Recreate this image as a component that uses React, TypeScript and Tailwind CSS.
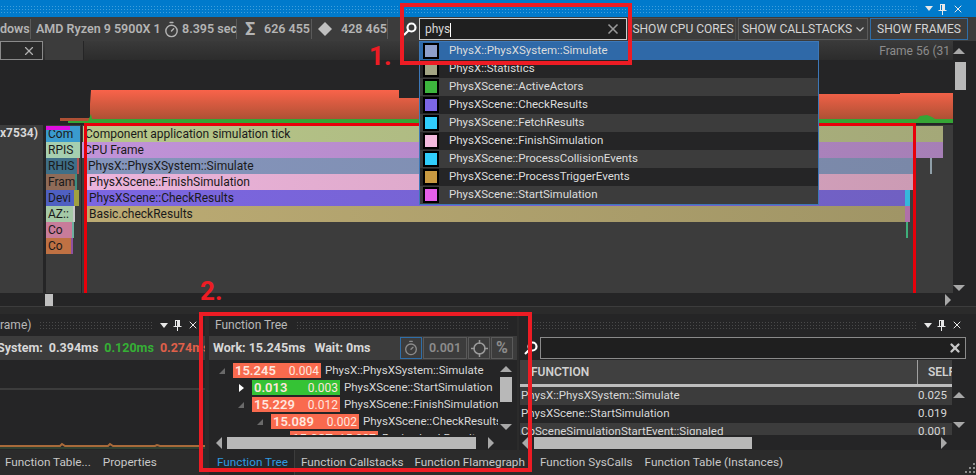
import React from "react";
import { Timer, X } from "lucide-react";

const font = "font-['Roboto','Noto_Sans',sans-serif]";

const PinIcon = () => (
  <svg width="9" height="12" viewBox="0 0 9 12" className="text-[#e8e8e8]">
    <path d="M2 1h5v6h1.500v1h-3.500v4h-1v-4h-3.500v-1h1.500z M3 2v5h1v-5z" fill="currentColor" fillRule="evenodd" />
  </svg>
);

const PanelControls = () => (
  <div className="flex items-center gap-[5px] text-[#e8e8e8]">
    <span className="w-0 h-0 border-l-[4px] border-r-[4px] border-t-[5px] border-l-transparent border-r-transparent border-t-[#e8e8e8]" />
    <PinIcon />
    <X size={12} strokeWidth={2} />
  </div>
);

const SearchIcon = ({ size = 14 }: { size?: number }) => (
  <svg width={size} height={size} viewBox="0 0 14 14" fill="none" stroke="#ffffff" strokeWidth="2.200">
    <circle cx="8.500" cy="5.500" r="4" />
    <path d="M5.500 8.500 1 13" />
  </svg>
);

const Sep = () => <span className="block w-px h-[20px] bg-[#5a5a5a] shrink-0" />;

const dropdownRows = [
  { name: "PhysX::PhysXSystem::Simulate", color: "bg-[#8f9fcb]", row: "bg-[#2f69a8]" },
  { name: "PhysX::Statistics", color: "bg-[#a3a584]", row: "bg-[#252526]" },
  { name: "PhysXScene::ActiveActors", color: "bg-[#3db53d]", row: "bg-[#3c3c3c]" },
  { name: "PhysXScene::CheckResults", color: "bg-[#7c66e4]", row: "bg-[#252526]" },
  { name: "PhysXScene::FetchResults", color: "bg-[#30cdfb]", row: "bg-[#3c3c3c]" },
  { name: "PhysXScene::FinishSimulation", color: "bg-[#f3bade]", row: "bg-[#252526]" },
  { name: "PhysXScene::ProcessCollisionEvents", color: "bg-[#30cdfb]", row: "bg-[#3c3c3c]" },
  { name: "PhysXScene::ProcessTriggerEvents", color: "bg-[#c99a41]", row: "bg-[#252526]" },
  { name: "PhysXScene::StartSimulation", color: "bg-[#e65fe8]", row: "bg-[#3c3c3c]" },
];

const trackBars = [
  { l: 46, t: 1, w: 34, c: "bg-[#3a9bce]", label: "Com" },
  { l: 46, t: 17, w: 34, c: "bg-[#a6cfb0]", label: "RPIS" },
  { l: 46, t: 33, w: 31, c: "bg-[#3f6f88]", label: "RHIS" },
  { l: 46, t: 49, w: 29, c: "bg-[#8f6b58]", label: "Fram" },
  { l: 46, t: 65, w: 28, c: "bg-[#4f60c2]", label: "Devi" },
  { l: 46, t: 81, w: 27, c: "bg-[#a5c9a6]", label: "AZ::" },
  { l: 46, t: 97, w: 26, c: "bg-[#c87c9a]", label: "Co" },
  { l: 46, t: 113, w: 25, c: "bg-[#bf7143]", label: "Co" },
  { l: 83, t: 1, w: 860, c: "bg-gradient-to-r from-[#b7c88a] to-[#a4a878]", label: "Component application simulation tick" },
  { l: 82, t: 17, w: 861, c: "bg-gradient-to-r from-[#c193d9] to-[#a67fb6]", label: "CPU Frame" },
  { l: 86, t: 33, w: 827, c: "bg-gradient-to-r from-[#8595bc] to-[#7a88a8]", label: "PhysX::PhysXSystem::Simulate" },
  { l: 87, t: 49, w: 826, c: "bg-gradient-to-r from-[#ecb4dc] to-[#cc9bb4]", label: "PhysXScene::FinishSimulation" },
  { l: 87, t: 65, w: 818, c: "bg-gradient-to-r from-[#7c66e2] to-[#7060c2]", label: "PhysXScene::CheckResults" },
  { l: 87, t: 81, w: 818, c: "bg-gradient-to-r from-[#bcab73] to-[#a09566]", label: "Basic.checkResults" },
  { l: 905, t: 65, w: 5, c: "bg-[#35b8dc]", label: "" },
  { l: 905, t: 81, w: 5, c: "bg-[#b070a8]", label: "" },
  { l: 906, t: 97, w: 1, c: "bg-[#3fae7a]", label: "" },
  { l: 930, t: 33, w: 1, c: "bg-[#8f9fa8]", label: "" },
  { l: 46, t: 1, w: 24, c: "bg-[#e010e0] !h-[4px]", label: "" },
  { l: 77, t: 33, w: 2, c: "bg-[#b05050]", label: "" },
  { l: 75, t: 49, w: 2, c: "bg-[#3f8f7f]", label: "" },
  { l: 74, t: 65, w: 5, c: "bg-[#a0a040]", label: "" },
  { l: 73, t: 81, w: 2, c: "bg-[#c8c8c8]", label: "" },
  { l: 72, t: 97, w: 1, c: "bg-[#6fb0a0]", label: "" },
  { l: 71, t: 113, w: 1, c: "bg-[#9050a0]", label: "" },
];

const treeRows = [
  { indent: "ml-[24px]", open: true, total: "15.245", self: "0.004", name: "PhysX::PhysXSystem::Simulate", c: "bg-[#f96a4e]" },
  { indent: "ml-[43px]", open: false, total: "0.013", self: "0.003", name: "PhysXScene::StartSimulation", c: "bg-[#35c335]" },
  { indent: "ml-[43px]", open: true, total: "15.229", self: "0.012", name: "PhysXScene::FinishSimulation", c: "bg-[#f96a4e]" },
  { indent: "ml-[62px]", open: true, total: "15.089", self: "0.002", name: "PhysXScene::CheckResults", c: "bg-[#f96a4e]" },
  { indent: "ml-[81px]", open: true, total: "15.087", self: "15.087", name: "Basic.checkResults", c: "bg-[#f96a4e]" },
];

const tableRows = [
  { name: "PhysX::PhysXSystem::Simulate", self: "0.025", c: "bg-[#3c3c3c]" },
  { name: "PhysXScene::StartSimulation", self: "0.019", c: "bg-[#252526]" },
  { name: "CpSceneSimulationStartEvent::Signaled", self: "0.001", c: "bg-[#3c3c3c]" },
];

const ArrowL = () => <span className="block w-0 h-0 border-y-[6px] border-r-[6px] border-y-transparent border-r-[#a8a8a8]" />;
const ArrowR = () => <span className="block w-0 h-0 border-y-[6px] border-l-[6px] border-y-transparent border-l-[#a8a8a8]" />;
const ArrowU = () => <span className="block w-0 h-0 border-x-[6px] border-b-[6px] border-x-transparent border-b-[#a8a8a8]" />;
const ArrowD = () => <span className="block w-0 h-0 border-x-[6px] border-t-[6px] border-x-transparent border-t-[#a8a8a8]" />;

const Dots = () => (
  <div className="flex-1 h-[8px] mx-2 bg-[radial-gradient(#4a4a4a_1px,transparent_1px)] bg-[length:3px_3px]" />
);

export default function App() {
  return (
    <div className={`${font} relative w-[976px] h-[475px] overflow-hidden bg-[#252526] text-[12px] text-[#d8d8d8] flex flex-col`}>
      {/* top window */}
      <div className="h-[17px] shrink-0 bg-[#007acc] flex items-center">
        <div className="flex-1 h-[8px] mr-2 bg-[radial-gradient(#3f9fdc_1px,transparent_1px)] bg-[length:3px_3px]" />
        <div className="pr-[12px]">
          <PanelControls />
        </div>
      </div>

      <div className="h-[24px] shrink-0 bg-[#3c3c3c] flex items-center text-[#b4b4b4] font-semibold text-[12.500px] whitespace-nowrap">
        <span className="w-[27px]">dows</span>
        <span className="ml-[3px]"><Sep /></span>
        <span className="ml-[5px] w-[124px]">AMD Ryzen 9 5900X 1</span>
        <Timer size={17} className="ml-[3px] mr-[2px]" />
        <span className="w-[52px]">8.395 sec</span>
        <span className="ml-[2px]"><Sep /></span>
        <span className="ml-[8px] w-[13px] text-[18px] leading-none font-bold">Σ</span>
        <span className="ml-[6px] w-[45px]">626 455</span>
        <span className="ml-[2px]"><Sep /></span>
        <svg width="14" height="14" viewBox="0 0 14 14" className="ml-[6px]"><path d="M7 0 14 7 7 14 0 7Z" fill="#c0c0c0" /></svg>
        <span className="ml-[9px] w-[45px]">428 465</span>
        <span className="ml-[1px]"><Sep /></span>
        <span className="ml-[15px]"><SearchIcon /></span>
        <div className="ml-[2px] w-[208px] h-[22px] border border-[#d0d0d0] bg-[#1f1f1f] flex items-center px-[5px] justify-between font-normal text-[12px] text-[#d8d8d8]">
          <span>
            phys<span className="inline-block w-px h-[14px] bg-white align-middle" />
          </span>
          <X size={16} strokeWidth={2.5} className="text-[#9a9a9a]" />
        </div>
        <div className="ml-[3px] flex gap-[2px] font-normal text-[12px] text-[#d4d4d4]">
          <div className="w-[106px] h-[22px] flex items-center justify-center border border-[#4a4a4a]">SHOW CPU CORES</div>
          <div className="w-[130px] h-[22px] flex items-center justify-center border border-[#5a5a5a] gap-1">
            SHOW CALLSTACKS
            <svg width="8" height="5" viewBox="0 0 8 5" fill="none" stroke="#c8c8c8" strokeWidth="1.200"><path d="M0.500 0.500 4 4l3.500-3.500" /></svg>
          </div>
          <div className="w-[98px] h-[22px] flex items-center justify-center border border-[#2f6ea8]">SHOW FRAMES</div>
        </div>
      </div>

      {/* ruler */}
      <div className="h-[19px] shrink-0 bg-gradient-to-b from-[#3a3a3a] to-[#2c2c2c] flex items-stretch">
        <div className="w-[43px] border border-[#8a8a8a] bg-[#2a2a2a] flex items-center justify-end pr-[6px]">
          <X size={14} strokeWidth={2} className="text-[#b0b0b0]" />
        </div>
        <div className="w-[38px] ml-[2px] bg-[#3c3c3c]" />
        <div className="w-px bg-[#252526]" />
        <div className="flex-1 flex justify-end items-center pr-[3px] text-[#8c8c8c] overflow-hidden whitespace-nowrap">Frame 56 (31</div>
        <div className="w-[23px] bg-[#252526] flex justify-start items-center"><ArrowU /></div>
      </div>

      {/* graph */}
      <div className="h-[65px] shrink-0 flex">
        <svg width="953" height="65" viewBox="0 0 953 65">
          <defs>
            <linearGradient id="flame" x1="0" y1="0" x2="0" y2="1">
              <stop offset="0" stopColor="#f9634a" />
              <stop offset="1" stopColor="#a94f33" />
            </linearGradient>
          </defs>
          <path d="M60 61V58h30V44l1-14V30H399V38H420V33H640V34H900V33H953V61Z" fill="url(#flame)" />
          <path d="M68 63V61H88L91 54L92 59H917L920 56L927 55L932 57L935 59H953V63Z" fill="#35a535" />
        </svg>
        <div className="w-[23px] bg-[#252526] flex justify-start pl-[2px] pt-[2px]">
          <div className="w-[11px] h-[28px] bg-[#b8b8b8]" />
        </div>
      </div>

      {/* timeline */}
      <div className="h-[168px] shrink-0 flex">
        <div className="relative flex-1 bg-[#3c3c3c] overflow-hidden text-[#1a1a1a]">
          <span className="absolute left-0 top-0 font-bold text-[#d8d8d8] leading-[17px]">x7534)</span>
          <div className="absolute left-[43px] top-0 bottom-0 w-[3px] bg-[#252526]" />
          <div className="absolute left-[81px] top-0 bottom-0 w-px bg-[#252526]" />
          {trackBars.map((b, i) => (
            <div
              key={i}
              className={`absolute h-[16px] leading-[16px] pl-[2px] overflow-hidden whitespace-nowrap ${b.c}`}
              style={{ left: b.l, top: b.t, width: b.w }}
            >
              {b.label}
            </div>
          ))}
        </div>
        <div className="w-[23px] bg-[#252526] flex justify-start items-end pb-[2px]"><ArrowD /></div>
      </div>

      {/* timeline h scrollbar */}
      <div className="h-[14px] shrink-0 bg-[#252526] flex items-center justify-between pl-[45px] pr-[25px] border-b border-[#3c3c3c]">
        <div className="w-[8px] h-[12px] bg-[#c0c0c0]" />
        <ArrowR />
      </div>

      {/* bottom panels */}
      <div className="flex-1 min-h-0 flex pt-[7px] bg-[#2b2b2b]">
        <div className="w-[205px] shrink-0 flex flex-col bg-[#252526]">
          <div className="h-[22px] shrink-0 flex items-center pr-[6px] text-[#b8b8b8]">
            <span>rame)</span>
            <Dots />
            <PanelControls />
          </div>
          <div className="h-[24px] shrink-0 bg-[#3c3c3c] flex items-center font-bold text-[12.500px] whitespace-nowrap overflow-hidden gap-[6px]">
            <span className="-ml-[3px]">System:</span>
            <span>0.394ms</span>
            <span className="text-[#35b035]">0.120ms</span>
            <span className="text-[#e0604a]">0.274ms</span>
          </div>
          <div className="h-[30px] shrink-0 border-b-2 border-[#3c3c3c]" />
          <div className="flex-1 min-h-0">
            <svg width="205" height="60" viewBox="0 0 205 60">
              <path d="M0 56H60L62 54 65 56H108L110 54 113 56H155L157 55 160 56H205" fill="none" stroke="#a86a3a" strokeWidth="2" />
              <path d="M0 58H205" stroke="#3f5f3f" strokeWidth="1" />
            </svg>
          </div>
        </div>

        <div className="w-[308px] shrink-0 ml-[4px] flex flex-col bg-[#252526]">
          <div className="h-[22px] shrink-0 flex items-center pl-[6px] text-[#b8b8b8]">
            <span>Function Tree</span>
            <Dots />
          </div>
          <div className="h-[24px] shrink-0 bg-[#3c3c3c] flex items-center pl-[4px] pr-[4px] font-bold text-[12.500px] whitespace-nowrap">
            <span>Work: 15.245ms</span>
            <span className="ml-[9px]">Wait: 0ms</span>
            <div className="ml-auto flex items-center gap-[1px] font-normal text-[#8c8c8c]">
              <div className="w-[22px] h-[22px] border border-[#2f6ea8] flex items-center justify-center"><Timer size={16} /></div>
              <div className="w-[44px] h-[22px] border border-[#5a5a5a] flex items-center justify-center font-semibold">0.001</div>
              <div className="w-[22px] h-[22px] border border-[#5a5a5a] flex items-center justify-center">
                <svg width="17" height="17" viewBox="0 0 17 17" fill="none" stroke="#9a9a9a" strokeWidth="1.500"><circle cx="8.500" cy="8.500" r="5.500" /><path d="M8.500 0v4M8.500 13v4M0 8.500h4M13 8.500h4" /></svg>
              </div>
              <div className="w-[22px] h-[22px] border border-[#5a5a5a] flex items-center justify-center text-[16px] font-bold">%</div>
            </div>
          </div>
          <div className="flex-1 min-h-0 flex">
            <div className="w-[289px] overflow-hidden pt-[2px] whitespace-nowrap text-[11.500px]">
              {treeRows.map((r) => (
                <div key={r.name} className={`relative h-[17px] flex items-center ${r.indent}`}>
                  <svg width="6" height="8" viewBox="0 0 6 8" className="absolute -left-[14px] top-[5px]">
                    {r.open ? <path d="M6 1V7H0Z" fill="#6a6a6a" /> : <path d="M1 0 6 4 1 8Z" fill="#ffffff" />}
                  </svg>
                  <div className={`w-[88px] h-[15px] px-[2px] flex justify-between items-center text-[#ffe6de] shrink-0 ${r.c}`}>
                    <span className="font-semibold text-[13px] leading-none">{r.total}</span>
                    <span className="text-[12px] leading-none">{r.self}</span>
                  </div>
                  <span className="ml-[4px]">{r.name}</span>
                </div>
              ))}
            </div>
            <div className="w-[16px] flex flex-col items-center pt-[6px]">
              <ArrowU />
              <div className="w-[12px] h-[25px] mt-[5px] bg-[#b8b8b8] shrink-0" />
              <div className="mt-[22px]"><ArrowD /></div>
            </div>
          </div>
          <div className="h-[15px] shrink-0 flex items-center pl-[7px] bg-[#252526]">
            <ArrowL />
            <div className="w-[249px] h-[12px] ml-[5px] bg-[#b8b8b8]" />
            <div className="ml-[12px]"><ArrowR /></div>
          </div>
        </div>

        <div className="flex-1 min-w-0 ml-[2px] flex flex-col bg-[#252526]">
          <div className="h-[22px] shrink-0 flex items-center pr-[13px]">
            <Dots />
            <PanelControls />
          </div>
          <div className="h-[24px] shrink-0 flex items-center pl-[5px] pr-[10px] gap-[2px]">
            <SearchIcon size={14} />
            <div className="flex-1 h-[22px] border border-[#8a8a8a] bg-[#1f1f1f] flex items-center justify-end pr-[3px]">
              <X size={14} strokeWidth={4} className="text-[#c8c8c8]" />
            </div>
          </div>
          <div className="flex-1 min-h-0 flex pl-[1px] pr-[10px]">
            <div className="flex-1 min-w-0 overflow-hidden text-[11.500px]">
              <div className="h-[27px] bg-[#404040] border-b-[3px] border-[#bdbdbd] flex items-center font-semibold text-[12px] text-[#d0d0d0]">
                <span className="pl-[11px] flex-1">FUNCTION</span>
                <span className="w-[35px] self-stretch border-l border-[#a0a0a0] pl-[10px] flex items-center overflow-hidden">SELF</span>
              </div>
              {tableRows.map((r) => (
                <div key={r.name} className={`h-[18px] flex items-center justify-between pl-[1px] pr-[5px] whitespace-nowrap ${r.c}`}>
                  <span>{r.name}</span>
                  <span>{r.self}</span>
                </div>
              ))}
            </div>
            <div className="w-[14px] flex flex-col items-center pt-[32px] gap-[24px]">
              <ArrowU />
              <ArrowD />
            </div>
          </div>
          <div className="h-[15px] shrink-0 flex items-center pl-[3px] pr-[29px]">
            <ArrowL />
            <div className="w-[218px] h-[12px] ml-[6px] bg-[#b8b8b8]" />
            <div className="ml-auto"><ArrowR /></div>
          </div>
        </div>
      </div>

      {/* tabs */}
      <div className="h-[25px] shrink-0 bg-[#2b2b2b] flex items-center whitespace-nowrap text-[11.750px] text-[#c8c8c8]">
        <div className="w-[209px] shrink-0 pl-[5px] flex gap-[12px]">
          <span>Function Table...</span>
          <span>Properties</span>
        </div>
        <span className="pl-[8px] pr-[6px] h-full flex items-center bg-[#252526] text-[#2f9ae0] border-r border-[#3c3c3c]">Function Tree</span>
        <span className="ml-[6px]">Function Callstacks</span>
        <span className="ml-[11px]">Function Flamegraph</span>
        <span className="ml-[15px]">Function SysCalls</span>
        <span className="ml-[12px]">Function Table (Instances)</span>
      </div>

      {/* red annotations */}
      <div className="absolute left-[84px] top-[123px] w-[832px] h-[170px] border-[3px] border-b-0 border-[#e8000a]" />
      <span className="absolute left-[369px] top-[37px] text-[26px] font-bold text-[#ed1c24]">1.</span>
      <span className="absolute left-[200px] top-[272px] text-[26px] font-bold text-[#ed1c24]">2.</span>

      {/* search dropdown */}
      <div className="absolute left-[419px] top-[41px] w-[400px] h-[164px] border border-[#3d78b8] bg-[#252526] text-[11.500px]">
        {dropdownRows.map((r) => (
          <div key={r.name} className={`h-[18px] flex items-center ${r.row}`}>
            <div className="ml-[3px] w-[16px] h-[16px] border-2 border-black shrink-0 flex">
              <div className={`flex-1 ${r.color}`} />
            </div>
            <span className="ml-[10px] text-[#dcdcdc] whitespace-nowrap">{r.name}</span>
          </div>
        ))}
      </div>

      <div className="absolute left-[400px] top-[3px] w-[232px] h-[62px] border-[4px] border-[#ed1c24]" />
      <div className="absolute left-[199px] top-[312px] w-[333px] h-[160px] border-[4px] border-[#ed1c24]" />

      {/* resize grip */}
      <svg width="14" height="14" viewBox="0 0 14 14" className="absolute right-0 bottom-0">
        <path d="M11 2h2v2h-2zM7 6h2v2H7zM11 6h2v2h-2zM3 10h2v2H3zM7 10h2v2H7zM11 10h2v2h-2z" fill="#8a8a8a" />
      </svg>
    </div>
  );
}
